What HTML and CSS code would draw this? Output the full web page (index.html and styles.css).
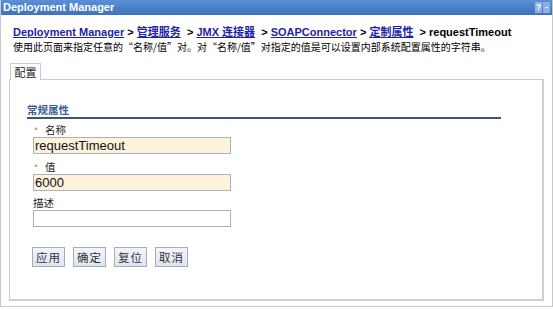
FILE: index.html
```html
<!DOCTYPE html>
<html lang="zh-CN">
<head>
    <meta charset="UTF-8">
    <title>Deployment Manager</title>
    <link rel="stylesheet" href="styles.css">
</head>
<body>
    <div class="portlet">
        <div class="titlebar">
            <span class="title">Deployment Manager</span>
            <span class="tools">
                <span class="tool">?</span>
                <span class="tool">-</span>
            </span>
        </div>
        <div class="content">
            <div class="crumbs">
                <a href="#">Deployment Manager</a> &gt;
                <a href="#">管理服务</a> &nbsp;&gt;
                <a href="#">JMX 连接器</a> &nbsp;&gt;
                <a href="#">SOAPConnector</a> &gt;
                <a href="#">定制属性</a> &nbsp;&gt; requestTimeout
            </div>
            <div class="desc">使用此页面来指定任意的“名称/值”对。对“名称/值”对指定的值是可以设置内部系统配置属性的字符串。</div>

            <div class="tabs">
                <span class="tab">配置</span>
            </div>
            <div class="panel">
                <div class="section">
                    <div class="section-title">常规属性</div>

                    <div class="field">
                        <label for="name"><span class="req">•</span>名称</label>
                        <input type="text" id="name" class="required" value="requestTimeout">
                    </div>
                    <div class="field">
                        <label for="value"><span class="req">•</span>值</label>
                        <input type="text" id="value" class="required" value="6000">
                    </div>
                    <div class="field">
                        <label for="description">描述</label>
                        <input type="text" id="description">
                    </div>
                </div>

                <div class="buttons">
                    <button type="button">应用</button>
                    <button type="button">确定</button>
                    <button type="button">复位</button>
                    <button type="button">取消</button>
                </div>
            </div>
        </div>
    </div>
</body>
</html>
```

FILE: styles.css
```css
body {
    margin: 0;
    background: #fff;
    font-family: "Liberation Sans", "Noto Sans CJK SC", sans-serif;
    color: #000;
}

.portlet {
    width: 551px;
    height: 306px;
    border: 1px solid #c9c9c9;
    border-top: none;
    background: #fff;
}

.titlebar {
    height: 15px;
    display: flex;
    align-items: center;
    justify-content: space-between;
    background: linear-gradient(to bottom, #5b8fd6, #3f72bd);
    padding: 0 2px 0 2px;
}

.title {
    color: #fff;
    font-weight: bold;
    font-size: 11px;
    line-height: 15px;
}

.tools {
    display: flex;
    gap: 1px;
}

.tool {
    width: 7px;
    height: 11px;
    background: #8fb1e2;
    color: #fff;
    font-size: 9px;
    line-height: 11px;
    text-align: center;
    font-weight: bold;
}

.content {
    padding: 10px 9px 0 8px;
}

.crumbs {
    font-size: 11px;
    font-weight: bold;
    line-height: 14px;
    padding-left: 4px;
    white-space: nowrap;
}

.crumbs a {
    color: #1f1fa8;
}

.desc {
    font-size: 10px;
    line-height: 14px;
    padding-left: 4px;
    margin-top: 1px;
    white-space: nowrap;
    font-family: "Noto Sans CJK SC", sans-serif;
}

.tabs {
    margin-top: 9px;
    height: 16px;
    display: flex;
}

.tab {
    margin-left: 1px;
    width: 29px;
    height: 16px;
    border: 1px solid #c6ccd4;
    border-bottom: none;
    background: #fff;
    font-size: 11px;
    line-height: 16px;
    text-align: center;
    font-family: "Noto Sans CJK SC", sans-serif;
    color: #222;
}

.panel {
    width: 535px;
    height: 222px;
    box-sizing: border-box;
    border: 1px solid #c6ccd4;
    border-bottom: 2px solid #c9d0d6;
    border-right: 2px solid #c9d0d6;
    padding: 0 0 0 17px;
}

.section {
    margin-top: 23px;
    width: 474px;
}

.section-title {
    font-family: "Noto Sans CJK SC", sans-serif;
    font-size: 10.5px;
    font-weight: bold;
    color: #3b5f9a;
    line-height: 14px;
    border-bottom: 2px solid #3e5674;
    margin-bottom: 4px;
}

.field {
    padding-left: 6px;
    margin-bottom: 6px;
}

.field label {
    display: block;
    font-family: "Noto Sans CJK SC", sans-serif;
    font-size: 10.5px;
    line-height: 12px;
    color: #222;
    margin-bottom: 1px;
}

.req {
    color: #c2a96a;
    font-size: 12px;
    margin-left: -3px;
    margin-right: 3px;
}

.field input {
    display: block;
    width: 198px;
    height: 17px;
    box-sizing: border-box;
    border: 1px solid #a9b1b9;
    background: #fff;
    font-family: "Liberation Sans", sans-serif;
    font-size: 13px;
    padding: 0 1px;
    color: #111;
    outline: none;
}

.field input.required {
    background: #fdf2dc;
}

.buttons {
    display: flex;
    gap: 8px;
    margin-top: 20px;
    padding-left: 5px;
}

.buttons button {
    height: 20px;
    width: 33px;
    padding: 0;
    border: 1px solid #a5adb8;
    background: linear-gradient(to bottom, #f1f5fb, #dde6f2);
    font-family: "Noto Sans CJK SC", sans-serif;
    font-size: 11.5px;
    color: #333;
    letter-spacing: 1px;
}
```
